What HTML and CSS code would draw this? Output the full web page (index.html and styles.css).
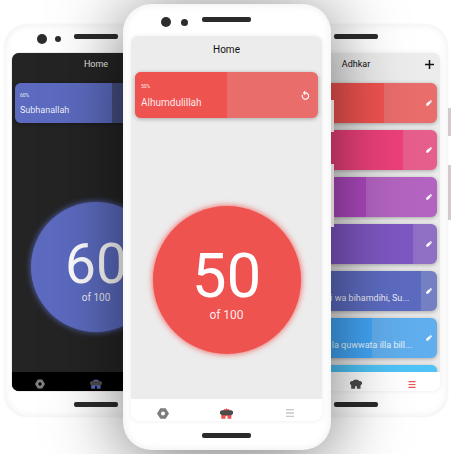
FILE: index.html
```html
<!DOCTYPE html>
<html lang="en">
<head>
<meta charset="utf-8">
<meta name="viewport" content="width=device-width, initial-scale=1">
<title>Dhikr counter</title>
<link rel="stylesheet" href="styles.css">
</head>
<body>
<svg class="sprite" aria-hidden="true">
  <symbol id="i-nut" viewBox="0 0 36 32"><path fill-rule="evenodd" d="M10 0h16l10 16-10 16H10L0 16zM18 10a6 6 0 1 0 0 12 6 6 0 0 0 0-12z"/></symbol>
  <symbol id="i-mosque" viewBox="0 0 40 32">
    <path class="accent" d="M9 8l4-6 4 1 3-3 3 3 4-1 4 6zM4 18h31v14H23v-6a3 3 0 0 0-6 0v6H4z"/>
    <path class="roof" d="M5 6h30l5 4v6l-5 5H5l-5-5v-6z"/>
  </symbol>
  <symbol id="i-list" viewBox="0 0 24 24"><path d="M0 0h24v4H0zM0 10h24v4H0zM0 20h24v4H0z"/></symbol>
  <symbol id="i-edit" viewBox="0 0 24 24"><path d="M1 23v-8L13 4l7 7L8 23zM15 3l4-3 5 5-3 5z"/></symbol>
  <symbol id="i-reset" viewBox="0 0 24 24"><path d="M8 5h4a8.500 8.500 0 1 1-8 5M11 0L7 5l4 5" fill="none" stroke="currentColor" stroke-width="3"/></symbol>
  <symbol id="i-plus" viewBox="0 0 24 24"><path d="M10 0h4v10h10v4H14v10h-4V14H0v-4h10z"/></symbol>
</svg>

<main class="stage">
  <section class="phone side left dark indigo">
    <div class="bezel"><div class="cams"><i></i><i></i></div><div class="bar"></div></div>
    <div class="screen">
      <header class="appbar"><h1>Home</h1></header>
      <div class="content">
        <article class="card indigo">
          <div class="fill" style="width:60%"></div>
          <div class="text"><small>60%</small><p>Subhanallah</p></div>
        </article>
        <button class="counter"><strong>60</strong><span>of 100</span></button>
      </div>
      <nav class="tabs">
        <a href="#settings" aria-label="Settings"><svg><use href="#i-nut"/></svg></a>
        <a href="#home" aria-label="Home" class="active mosque"><svg><use href="#i-mosque"/></svg></a>
        <a href="#adhkar" aria-label="Adhkar"><svg class="list"><use href="#i-list"/></svg></a>
      </nav>
    </div>
    <div class="chin"><div class="bar"></div></div>
  </section>

  <section class="phone side right red">
    <div class="bezel"><div class="cams"><i></i><i></i></div><div class="bar"></div></div>
    <div class="screen">
      <header class="appbar"><h1>Adhkar</h1><button class="add" aria-label="Add"><svg><use href="#i-plus"/></svg></button></header>
      <div class="content">
        <article class="card red"><div class="fill" style="width:67%"></div><button class="act" aria-label="Edit"><svg><use href="#i-edit"/></svg></button></article>
        <article class="card pink"><div class="fill" style="width:79%"></div><button class="act" aria-label="Edit"><svg><use href="#i-edit"/></svg></button></article>
        <article class="card purple"><div class="fill" style="width:56%"></div><button class="act" aria-label="Edit"><svg><use href="#i-edit"/></svg></button></article>
        <article class="card violet"><div class="fill" style="width:85%"></div><button class="act" aria-label="Edit"><svg><use href="#i-edit"/></svg></button></article>
        <article class="card indigo"><div class="fill" style="width:90%"></div><div class="text"><p>SubhanAllahi wa bihamdihi, Su...</p></div><button class="act" aria-label="Edit"><svg><use href="#i-edit"/></svg></button></article>
        <article class="card blue"><div class="fill" style="width:60%"></div><div class="text"><p>La hawla wa la quwwata illa bill...</p></div><button class="act" aria-label="Edit"><svg><use href="#i-edit"/></svg></button></article>
        <article class="card sky"><div class="fill" style="width:100%"></div></article>
      </div>
      <nav class="tabs">
        <a href="#settings" aria-label="Settings"><svg><use href="#i-nut"/></svg></a>
        <a href="#home" aria-label="Home" class="mosque"><svg><use href="#i-mosque"/></svg></a>
        <a href="#adhkar" aria-label="Adhkar" class="active"><svg class="list"><use href="#i-list"/></svg></a>
      </nav>
    </div>
    <div class="chin"><div class="bar"></div></div>
  </section>

  <section class="phone front red">
    <div class="bezel"><div class="cams"><i></i><i></i></div><div class="bar"></div></div>
    <div class="screen">
      <header class="appbar"><h1>Home</h1></header>
      <div class="content">
        <article class="card red">
          <div class="fill" style="width:50%"></div>
          <div class="text"><small>50%</small><p>Alhumdulillah</p></div>
          <button class="act" aria-label="Reset"><svg><use href="#i-reset"/></svg></button>
        </article>
        <button class="counter"><strong>50</strong><span>of 100</span></button>
      </div>
      <nav class="tabs">
        <a href="#settings" aria-label="Settings"><svg><use href="#i-nut"/></svg></a>
        <a href="#home" aria-label="Home" class="active mosque"><svg><use href="#i-mosque"/></svg></a>
        <a href="#adhkar" aria-label="Adhkar"><svg class="list"><use href="#i-list"/></svg></a>
      </nav>
    </div>
    <div class="chin"><div class="bar"></div></div>
  </section>
</main>
</body>
</html>
```

FILE: styles.css
```css
* { box-sizing: border-box; margin: 0; padding: 0; }
body { background: #fff; font-family: Roboto, "Liberation Sans", sans-serif; overflow: hidden; }
button { border: 0; background: none; font: inherit; color: inherit; cursor: pointer; }
svg { display: block; fill: currentColor; }
.sprite { position: absolute; width: 0; height: 0; }

.red { --c: #ef5350; }
.pink { --c: #ec407a; }
.purple { --c: #ab47bc; }
.violet { --c: #7e57c2; }
.indigo { --c: #5c6bc0; }
.blue { --c: #42a5f5; }
.sky { --c: #4fc3f7; }

/* Three overlapping phones share one row */
.stage {
  display: grid;
  grid-template-columns: 119fr 65fr 76fr 67fr 117fr;
  align-items: start;
  padding: 4px 5px 4px 4px;
}
.left { grid-area: 1 / 1 / 2 / 3; }
.front { grid-area: 1 / 2 / 2 / 5; }
.right { grid-area: 1 / 4 / 2 / 6; }

.phone {
  --bg: #ececec;
  --ink: #111;
  --tabs: #fff;
  --icon: #7d7d7d;
  position: relative;
  padding: 0 8px;
  border-radius: 24px;
  background: #fff;
  box-shadow: inset 0 0 8px rgba(0, 0, 0, .08), 0 0 2px rgba(0, 0, 0, .05);
}
.phone.dark { --bg: #242424; --ink: #e6e6e6; --tabs: #000; --icon: #808080; }
.side { margin-top: 20px; }
.front {
  padding-right: 9px;
  border-radius: 28px;
  box-shadow: inset 0 0 8px rgba(0, 0, 0, .08), 0 8px 72px rgba(0, 0, 0, .54);
}
/* Power and volume keys */
.front::before, .front::after, .right::before, .right::after {
  content: "";
  position: absolute;
  left: 100%;
  width: 3px;
  background: #d3cbc9;
}
.right::before { top: 84px; height: 28px; }
.right::after { top: 141px; height: 55px; }
.front::before { top: 96px; height: 32px; }
.front::after { top: 160px; height: 63px; }

.bezel {
  display: grid;
  grid-template-columns: 1fr 44px 1fr;
  align-items: start;
  height: 29px;
  padding-top: 10px;
}
.cams { display: flex; justify-content: flex-end; align-items: center; gap: 8px; padding-right: 13px; }
.cams i { width: 10px; height: 10px; border-radius: 50%; background: #2d2d2d; }
.cams i + i { width: 6px; height: 6px; }
.bar { width: 44px; height: 5px; border-radius: 2px; background: #2b2b2b; }
.chin { display: flex; justify-content: center; height: 26px; padding-top: 11px; }
.front .bezel { grid-template-columns: 1fr 49px 1fr; height: 32px; padding-top: 13px; }
.front .cams { gap: 10px; padding-right: 14px; }
.front .cams i + i { width: 7px; height: 7px; }
.front .bar { width: 49px; }
.front .chin { height: 29px; padding-top: 12px; }

.screen { display: flex; flex-direction: column; border-radius: 7px; overflow: hidden; background: var(--bg); }
.dark .screen { box-shadow: 0 0 1px #555; }
.right .screen, .front .screen { box-shadow: 0 0 5px rgba(0, 0, 0, .08); }
.appbar { position: relative; display: flex; align-items: center; justify-content: center; height: 22px; color: var(--ink); }
.appbar h1 { font-size: 9px; line-height: 12px; font-weight: 400; }
.add { position: absolute; right: 6px; top: 7px; }
.add svg { width: 9px; height: 9px; }
.front .appbar { height: 28px; }
.front .appbar h1 { font-size: 10px; }

.content { display: flex; flex-direction: column; gap: 7px; height: 297px; padding: 8px 3px 0; overflow: hidden; }
.front .content { height: 335px; padding: 8px 4px 0; }

.card {
  position: relative;
  display: flex;
  flex: none;
  align-items: center;
  justify-content: flex-end;
  height: 40px;
  padding: 0 5px;
  border-radius: 6px;
  overflow: hidden;
  color: #fff;
  background: color-mix(in srgb, var(--c) 79%, #d0d0d0);
  box-shadow: 0 1px 4px rgba(0, 0, 0, .3);
}
.dark .card { background: color-mix(in srgb, var(--c) 60%, var(--bg)); }
.fill { position: absolute; inset: 0 auto 0 0; background: var(--c); }
.text { position: relative; flex: 1; align-self: flex-end; padding-bottom: 7px; white-space: nowrap; color: rgba(255, 255, 255, .9); }
.text small { display: block; font-size: 5px; line-height: 6px; margin-bottom: 6px; }
.text p { font-size: 9px; line-height: 12px; }
.act { position: relative; flex: none; }
.act svg { width: 6px; height: 6px; }
.front .card { height: 46px; padding: 0 8px 0 6px; }
.front .text { padding-bottom: 9px; }
.front .text small { margin-bottom: 8px; }
.front .text p { font-size: 10px; }
.front .act svg { width: 9px; height: 9px; }

.counter {
  display: flex;
  flex: none;
  flex-direction: column;
  align-items: center;
  justify-content: center;
  align-self: center;
  width: 130px;
  height: 130px;
  margin-top: 72px;
  padding-top: 10px;
  border-radius: 50%;
  background: var(--c);
  box-shadow: 0 0 6px var(--c);
  color: #fff;
}
.counter strong { font-size: 55px; line-height: 52px; font-weight: 400; }
.counter span { font-size: 10px; line-height: 16px; color: rgba(255, 255, 255, .9); }
.front .counter { width: 148px; height: 148px; margin-top: 81px; }
.front .counter strong { font-size: 62px; line-height: 60px; }
.front .counter span { font-size: 12px; line-height: 18px; }

.tabs { display: grid; grid-template-columns: repeat(3, 1fr); height: 19px; padding-top: 5px; background: var(--tabs); color: var(--icon); }
.tabs a { display: flex; align-items: center; justify-content: center; color: inherit; }
.tabs svg { width: 10px; height: 10px; }
.tabs .list { width: 8px; height: 7px; }
.tabs .mosque svg { width: 12px; }
.accent { fill: var(--accent, #4c4c4c); }
.roof { fill: #4c4c4c; }
.tabs .active { --accent: var(--c); }
.tabs .active .list { fill: var(--c); }
.front .tabs { height: 22px; padding-top: 6px; }
.front .tabs svg { width: 12px; height: 11px; }
.front .tabs .mosque svg { width: 13px; }
.front .tabs .list { width: 8px; height: 8px; color: #c8c8c8; }
```
